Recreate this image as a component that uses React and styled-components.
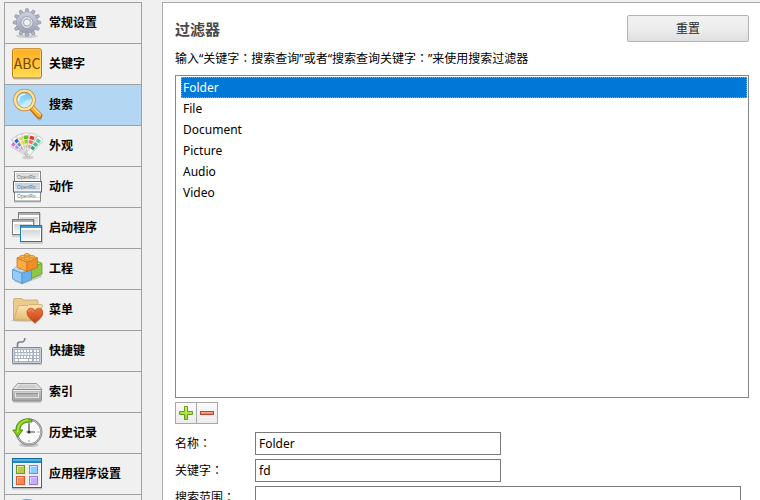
import React, { useState } from "react";
import styled, { createGlobalStyle, css } from "styled-components";

const GlobalStyle = createGlobalStyle`
  * { box-sizing: border-box; }
  body {
    margin: 0;
    background: #f0f0f0;
    color: #000;
    font: 12px/20px "Noto Sans", "Noto Sans CJK SC", sans-serif;
  }
  button, input { font: inherit; color: inherit; }
`;

const Window = styled.div`
  display: flex;
  gap: 20px;
  height: 100vh;
  padding: 2px 0 0 4px;
  overflow: hidden;
`;

const Sidebar = styled.nav`
  flex: none;
  width: 138px;
  height: max-content;
  border: 1px solid #a0a0a0;
  border-bottom: 0;
`;

const SidebarItem = styled.button`
  display: flex;
  align-items: center;
  gap: 6px;
  width: 100%;
  height: 41px;
  padding: 0 6px;
  border: 0;
  border-bottom: 1px solid #a0a0a0;
  background: ${(p) => (p.$active ? "#b3d7f3" : "#f0f0f0")};
  font-weight: 700;
  text-align: left;
  white-space: nowrap;
`;

const Icon = styled.svg`
  flex: none;
  width: 32px;
  height: 32px;
  font-weight: 400;
`;

const Panel = styled.main`
  flex: 1;
  min-width: 0;
  height: max-content;
  min-height: 100%;
  padding: 12px 11px 12px 12px;
  border: solid #acacac;
  border-width: 1px 0 0 1px;
  background: #fff;
`;

const Header = styled.header`
  display: flex;
  align-items: center;
  justify-content: space-between;
  height: 27px;
`;

const Title = styled.h1`
  margin: 0;
  color: #484848;
  font-size: 15px;
  font-weight: 700;
`;

const ResetButton = styled.button`
  width: 122px;
  height: 27px;
  padding: 0;
  border: 1px solid #b4b4b4;
  border-radius: 2px;
  background: linear-gradient(#f2f2f2, #ededed 50%, #dfdfdf);
  color: #2b2b2b;
`;

const Hint = styled.p`
  margin: 7px 0 6px;
`;

const ColonMark = styled.span`
  font-family: "Noto Sans CJK JP", sans-serif;
  line-height: 1;
`;

const FilterList = styled.ul`
  height: 323px;
  margin: 0;
  padding: 1px 1px 1px 5px;
  border: 1px solid #828790;
  list-style: none;
`;

const FilterRow = styled.li`
  height: 21px;
  padding: 0 1px;
  border: 1px solid transparent;
  line-height: 19px;
  cursor: default;
  ${(p) =>
    p.$selected &&
    css`
      border: 1px dotted #ff8728;
      background: #0078d7;
      color: #fff;
    `}
`;

const Tools = styled.div`
  display: flex;
  margin: 4px 0 8px;
`;

const ToolButton = styled.button`
  display: grid;
  place-items: center;
  width: 22px;
  height: 22px;
  padding: 0;
  border: 1px solid #a8a8a8;
  background: linear-gradient(#fafafa, #ececec);
  & + & { margin-left: -1px; }
`;

const ToolIcon = styled.svg`
  width: 16px;
  height: 16px;
`;

const Form = styled.form`
  display: grid;
  grid-template-columns: 76px minmax(0, 1fr);
  gap: 4px;
  margin-right: 8px;
`;

const Label = styled.label`
  line-height: 23px;
  white-space: nowrap;
`;

const Field = styled.input`
  width: ${(p) => (p.$wide ? "100%" : "246px")};
  max-width: 100%;
  height: 23px;
  padding: 0 3px;
  border: 1px solid #7a7a7a;
  border-radius: 0;
  background: #fff;
`;

const Colon = () => <ColonMark>：</ColonMark>;

function Gradient({ id, from, to }) {
  return (
    <linearGradient id={id} x1="0" y1="0" x2="0" y2="1">
      <stop offset="0" stopColor={from} />
      <stop offset="1" stopColor={to} />
    </linearGradient>
  );
}

const teeth = Array.from({ length: 12 }, (_, i) => i * 30);

const GearIcon = () => (
  <Icon viewBox="0 0 32 32" aria-hidden="true">
    <Gradient id="gear" from="#cdd1de" to="#9a9fb2" />
    <ellipse cx="16" cy="29" rx="11" ry="2" fill="#000" opacity=".14" />
    <g fill="#b1b6c7" stroke="#85899b" strokeWidth=".6">
      {teeth.map((a) => (
        <path key={a} d="M14 6 14.8 1.7h2.4L18 6z" transform={`rotate(${a} 16 15.5)`} />
      ))}
    </g>
    <circle cx="16" cy="15.5" r="10.6" fill="url(#gear)" stroke="#8b90a3" strokeWidth=".6" />
    <circle cx="16" cy="15.5" r="10.2" fill="url(#gear)" />
    <circle cx="16" cy="15.5" r="5.8" fill="#c9cdda" stroke="#8b90a3" strokeWidth=".8" />
    <circle cx="16" cy="15.5" r="5" fill="none" stroke="#eceef4" strokeWidth=".9" />
    <circle cx="16" cy="15.5" r="3.5" fill="#f0f0f0" stroke="#9a9fb1" strokeWidth=".8" />
  </Icon>
);

const KeywordIcon = () => (
  <Icon viewBox="0 0 32 32" aria-hidden="true">
    <Gradient id="abc" from="#ffad20" to="#ffdc52" />
    <rect x="1.5" y="2" width="29" height="29.5" rx="2.5" fill="#000" opacity=".22" />
    <rect x="1.5" y=".8" width="29" height="29" rx="2" fill="url(#abc)" stroke="#bd780b" />
    <rect x="2.5" y="1.8" width="27" height="27" rx="1" fill="none" stroke="#ffe084" strokeWidth=".7" />
    <text x="16" y="20.5" textAnchor="middle" fontFamily="'Noto Sans CJK SC', sans-serif" fontSize="14" fill="#754500">ABC</text>
  </Icon>
);

const SearchIcon = () => (
  <Icon viewBox="0 0 32 32" aria-hidden="true">
    <Gradient id="lens" from="#65c0fa" to="#c9f0ff" />
    <path d="m21 20 7.5 9" stroke="#000" strokeOpacity=".18" strokeWidth="5" strokeLinecap="round" />
    <path d="m20 18 8.2 8.6" stroke="#b96b05" strokeWidth="6" strokeLinecap="round" />
    <path d="m20 17.6 8.2 8.6" stroke="#ffb02b" strokeWidth="4.2" strokeLinecap="round" />
    <path d="m21.5 17.5 7.7 7.7" stroke="#ffe297" strokeWidth="1.2" strokeLinecap="round" />
    <circle cx="13.5" cy="11" r="9.4" fill="url(#lens)" stroke="#b9822b" strokeWidth="3.6" />
    <circle cx="13.5" cy="11" r="9.4" fill="none" stroke="#ffe3a0" strokeWidth="2.4" />
    <path d="M7.5 11.500a6 6 0 0 1 6-6.300" fill="none" stroke="#e7f8ff" strokeWidth="1.6" strokeLinecap="round" />
    <path d="M21 10c-5 .5-9 3-10.500 8 5 2 10.500-2 10.500-8z" fill="#e7faff" opacity=".5" />
  </Icon>
);

const blades = [
  [-54, "#f8f8f8", ["#d66fe0", "#b08cf0", "#e3b5ea"]],
  [-38, "#f8f8f8", ["#2f62d0", "#4f86e6", "#8db4f2"]],
  [-22, "#f8f8f8", ["#ffd820", "#f7e04a", "#f7ec90"]],
  [-6, "#f8f8f8", ["#6fbd10", "#93d234", "#c1e878"]],
  [14, "#f8f8f8", ["#ec3428", "#f76c60", "#f9a298"]],
  [38, "#f2f7f4", ["#5bcda3", "#44b98e", "#30a577"]],
];

const AppearanceIcon = () => (
  <Icon viewBox="0 0 32 32" aria-hidden="true">
    <ellipse cx="17" cy="27.5" rx="6" ry="1.8" fill="#000" opacity=".15" />
    {blades.map(([angle, paper, colors]) => (
      <g key={angle} transform={`rotate(${angle} 16.5 24.5)`}>
        <path d="M13 4.500q0-1.500 1.500-1.500h4.500q1.500 0 1.500 1.500L18.500 26h-3.500z" fill={paper} stroke="#b0b0b0" strokeWidth=".6" />
        {colors.map((c, i) => (
          <rect key={c} x={14.5 + i * 0.2} y={5.5 + i * 4.5} width={4.4 - i * 0.4} height="3.4" fill={c} />
        ))}
      </g>
    ))}
    <circle cx="16.5" cy="24.5" r="1" fill="#aaa" />
  </Icon>
);

const ActionIcon = () => (
  <Icon viewBox="0 0 32 32" aria-hidden="true">
    <Gradient id="act" from="#b9cfe5" to="#dce9f5" />
    <Gradient id="actTop" from="#d4d4d4" to="#f5f5f5" />
    <rect x="3" y="30" width="27" height="1.5" fill="#000" opacity=".2" />
    <rect x="3.5" y=".5" width="26" height="10" fill="#fff" stroke="#858585" />
    <rect x="5" y="2" width="23" height="7.5" fill="url(#actTop)" />
    <rect x="3.5" y="20.5" width="26" height="9.5" fill="#fff" stroke="#858585" />
    <rect x="2.5" y="10.5" width="28" height="10.5" fill="#fff" stroke="#3d618f" />
    <rect x="4" y="12" width="25" height="7.5" fill="url(#act)" />
    <g fontFamily="'Liberation Sans', sans-serif" fontSize="5" fill="#6c6c6c">
      <text x="6" y="7.5">OpenRo...</text>
      <text x="6" y="17.5">OpenRo...</text>
      <text x="6" y="26.5">OpenRo...</text>
    </g>
  </Icon>
);

function MiniWindow({ x, y, w, h, blue }) {
  return (
    <g>
      <rect x={x} y={y + 1} width={w + 1} height={h + 1} fill="#000" opacity=".15" />
      <rect x={x + 0.5} y={y + 0.5} width={w - 1} height={h - 1} fill="#fff" stroke={blue ? "#137ab8" : "#7d7d7d"} />
      <rect x={x + 2} y={y + 5} width={w - 4} height={h - 7} fill="url(#winBody)" />
      <rect x={x + 1} y={y + 1} width={w - 2} height="2" fill={blue ? "#3d9ddc" : "#adadad"} />
    </g>
  );
}

const ProgramsIcon = () => (
  <Icon viewBox="0 0 32 32" aria-hidden="true">
    <Gradient id="winBody" from="#d3d5d8" to="#f8f8f8" />
    <MiniWindow x={7} y={0} w={22} h={16} />
    <MiniWindow x={1} y={7} w={22} h={16} />
    <MiniWindow x={9} y={13} w={22} h={17} blue />
  </Icon>
);

const ProjectIcon = () => (
  <Icon viewBox="0 0 32 32" aria-hidden="true">
    <path d="m2 28 9 3.500 12-4.500 8-3-2-4z" fill="#000" opacity=".16" />
    <g strokeLinejoin="round" strokeWidth=".7">
      <g stroke="#5d9323">
        <path d="m20.5 13 5-4.500 5.500 2v10.500l-10.500 4.500z" fill="#8dc744" />
        <path d="m20.5 14 10.500-3.500-4-2-6.500 1z" fill="#b9e37b" />
      </g>
      <g stroke="#4a8bc6">
        <path d="m1.500 16.500 9.500 3.500v10.500L1.500 26z" fill="#94cbf8" />
        <path d="m11 20 9.500-3.500V26.500L11 30.500z" fill="#6db1ec" />
        <path d="m1.500 16.500 9-4 10 4-9.500 3.500z" fill="#b9e0ff" />
      </g>
      <g fill="#cfeaff" stroke="#6ba8dc" strokeWidth=".5">
        <ellipse cx="6" cy="15.5" rx="2.6" ry="1.400" />
        <ellipse cx="11" cy="17.5" rx="2.600" ry="1.400" />
      </g>
      <g stroke="#c06c14">
        <path d="m6 5 10 4v9.500L6 14.500z" fill="#fbab44" />
        <path d="m16 9 10.500-4v9.500L16 18.500z" fill="#ee8f26" />
        <path d="m6 5 10-4 10.500 4L16 9z" fill="#ffc46a" />
      </g>
      <g fill="#ffb550" stroke="#cf7d22" strokeWidth=".6">
        <path d="M13.500 1.500v1.500c.5 1.200 4.500 1.200 5 0V1.500M8.800 3.500V5c.5 1.200 4.500 1.200 5 0V3.500m4.700 0V5c.5 1.200 4.500 1.200 5 0V3.500M13.500 5.500V7c.5 1.200 4.500 1.200 5 0V5.500" />
        <ellipse cx="16" cy="1.600" rx="2.500" ry="1.200" />
        <ellipse cx="11.300" cy="3.500" rx="2.500" ry="1.200" />
        <ellipse cx="21" cy="3.500" rx="2.500" ry="1.200" />
        <ellipse cx="16" cy="5.500" rx="2.500" ry="1.200" />
      </g>
    </g>
  </Icon>
);

const MenuIcon = () => (
  <Icon viewBox="0 0 32 32" aria-hidden="true">
    <Gradient id="fold" from="#fae5b3" to="#e5bd76" />
    <Gradient id="heart" from="#ee7440" to="#c3400f" />
    <ellipse cx="14" cy="26.5" rx="14" ry="1.5" fill="#000" opacity=".15" />
    <path d="M2.500 26V5.500q0-1 1-1h7q1 0 1.500 1.500h14q1 0 1 1V26z" fill="#eccb91" stroke="#c9a264" strokeWidth=".8" />
    <path d="M3 26 7 12.500q.3-1 1.300-1H17l1-1h12.500q1 0 .8 1L28 26z" fill="url(#fold)" stroke="#cba466" strokeWidth=".8" />
    <path d="M24 29.500c-2-3-8-6-8-11 0-4.500 6-6 8-1.500 2-4.500 8-3 8 1.500 0 5-6 8-8 11z" fill="url(#heart)" stroke="#a53b14" strokeWidth=".6" />
    <path d="M17.500 18c.5-3 4-3 5.500 0" fill="none" stroke="#f6a37a" strokeWidth=".7" />
  </Icon>
);

const keyRows = [15, 18, 21];
const keyCols = [4, 7, 10, 13, 16, 19];

const KeyboardIcon = () => (
  <Icon viewBox="0 0 32 32" aria-hidden="true">
    <rect x="1" y="28" width="30" height="2" fill="#000" opacity=".15" />
    <path d="M6.500 12V9.500Q6.500 7 9 7h2q2.500 0 3-4" fill="none" stroke="#79828a" strokeWidth="1.6" />
    <rect x="1.5" y="12.5" width="29" height="16" rx="1" fill="#a9b4c0" stroke="#7e8995" />
    <rect x="2.5" y="13.5" width="27" height="14" fill="none" stroke="#d3dae2" strokeWidth=".7" />
    <g fill="#fff">
      {keyRows.map((y, r) =>
        keyCols.map((x) => <rect key={`${x}-${y}`} x={x + (r === 1 ? 0.5 : 0)} y={y} width="2" height="2" />)
      )}
      <rect x="4" y="24" width="3" height="2" />
      <rect x="8" y="24" width="9" height="2" />
      <rect x="18" y="24" width="3" height="2" />
      {[...keyRows, 24].map((y) => (
        <g key={y}>
          <rect x="23" y={y} width="2" height="2" />
          <rect x="26" y={y} width="2" height="2" />
        </g>
      ))}
    </g>
  </Icon>
);

const IndexIcon = () => (
  <Icon viewBox="0 0 32 32" aria-hidden="true">
    <Gradient id="drv" from="#c9c9c9" to="#a2a2a2" />
    <rect x="2" y="25" width="28" height="2" fill="#000" opacity=".14" />
    <path d="M6.500 7.500h19l5.500 6H1.500z" fill="#e2e2e2" stroke="#9a9a9a" />
    <path d="M8.500 8.800h15l3.500 3.500H5.500z" fill="#cdcdcd" />
    <rect x="1.5" y="13.500" width="29" height="11.500" rx="1" fill="url(#drv)" stroke="#8c8c8c" />
    <path d="M2.500 14.500h27" stroke="#ededed" />
    <rect x="4.5" y="17" width="23" height="4.500" fill="#b4b4b4" stroke="#e2e2e2" />
    <path d="M5 17.500h22" stroke="#919191" />
  </Icon>
);

const HistoryIcon = () => (
  <Icon viewBox="0 0 32 32" aria-hidden="true">
    <ellipse cx="18" cy="28" rx="10" ry="2" fill="#000" opacity=".18" />
    <circle cx="18" cy="15" r="12.3" fill="#fafafa" stroke="#808080" strokeWidth="2.2" />
    <circle cx="18" cy="15" r="12.3" fill="none" stroke="#c4c4c4" strokeWidth="1" />
    <path d="M18 5v2m0 16v2m8.500-10h2" stroke="#999" />
    <path d="M18 6.500v9m-2.500-.5h8.500" stroke="#454545" strokeWidth="1.200" />
    <circle cx="18" cy="15" r="1.500" fill="#333" />
    <path d="M21 2.500C13 0 4.500 5 5 13H1.800l5 6.800 5-6.800H9c0-5 4-8.500 12-8z" fill="#84cc18" stroke="#46820a" strokeWidth=".9" strokeLinejoin="round" />
    <path d="M17 2.700C10.500 3.500 6.700 8 6.700 15" fill="none" stroke="#c5f176" strokeWidth=".9" />
  </Icon>
);

const tiles = [
  [5.5, 7.5, "#b5cd4f", "#77911f"],
  [18.5, 7.5, "#8ccbff", "#589fd9"],
  [5.5, 18.5, "#ff8260", "#d85e2e"],
  [18.5, 18.5, "#c5adff", "#967bd5"],
];

const AppSettingsIcon = () => (
  <Icon viewBox="0 0 32 32" aria-hidden="true">
    <rect x="1" y="30" width="30" height="1.5" fill="#000" opacity=".2" />
    <rect x="1.5" y=".5" width="29" height="29" fill="#fff" stroke="#146d9e" />
    <rect x="3" y="6" width="26" height="22" fill="#ececec" />
    <rect x="2" y="1" width="28" height="2" fill="#58b2e6" />
    <rect x="2" y="3" width="28" height="2" fill="#1f86c4" />
    {tiles.map(([x, y, fill, stroke]) => (
      <g key={fill}>
        <rect x={x} y={y} width="8" height="8" fill={fill} stroke={stroke} />
        <path d={`M${x + 1} ${y + 7}v-6h6`} fill="none" stroke="#fff" strokeOpacity=".5" />
      </g>
    ))}
  </Icon>
);

const InfoIcon = () => (
  <Icon viewBox="0 0 32 32" aria-hidden="true">
    <circle cx="16" cy="15" r="15" fill="#4aa3e2" />
    <circle cx="16" cy="15" r="13" fill="#2b8ed6" />
  </Icon>
);

const sections = [
  ["常规设置", GearIcon],
  ["关键字", KeywordIcon],
  ["搜索", SearchIcon],
  ["外观", AppearanceIcon],
  ["动作", ActionIcon],
  ["启动程序", ProgramsIcon],
  ["工程", ProjectIcon],
  ["菜单", MenuIcon],
  ["快捷键", KeyboardIcon],
  ["索引", IndexIcon],
  ["历史记录", HistoryIcon],
  ["应用程序设置", AppSettingsIcon],
  ["", InfoIcon],
];

const filters = [
  ["Folder", "fd"],
  ["File", ""],
  ["Document", ""],
  ["Picture", ""],
  ["Audio", ""],
  ["Video", ""],
];

export default function App() {
  const [section, setSection] = useState(2);
  const [selected, setSelected] = useState(0);
  const [name, keyword] = filters[selected];

  return (
    <>
      <GlobalStyle />
      <Window>
        <Sidebar>
          {sections.map(([label, Glyph], i) => (
            <SidebarItem key={i} type="button" $active={i === section} onClick={() => setSection(i)}>
              <Glyph />
              {label}
            </SidebarItem>
          ))}
        </Sidebar>
        <Panel>
          <Header>
            <Title>过滤器</Title>
            <ResetButton type="button">重置</ResetButton>
          </Header>
          <Hint>
            输入“关键字<Colon />搜索查询”或者“搜索查询关键字<Colon />”来使用搜索过滤器
          </Hint>
          <FilterList role="listbox" aria-label="过滤器" tabIndex={0}>
            {filters.map(([label], i) => (
              <FilterRow
                key={label}
                role="option"
                aria-selected={i === selected}
                $selected={i === selected}
                onClick={() => setSelected(i)}
              >
                {label}
              </FilterRow>
            ))}
          </FilterList>
          <Tools>
            <ToolButton type="button" aria-label="添加">
              <ToolIcon viewBox="0 0 16 16" aria-hidden="true">
                <Gradient id="plus" from="#d8f277" to="#8ed02c" />
                <path d="M6.500 1.500h3v5h5v3h-5v5h-3v-5h-5v-3h5z" fill="url(#plus)" stroke="#5fa112" />
              </ToolIcon>
            </ToolButton>
            <ToolButton type="button" aria-label="删除">
              <ToolIcon viewBox="0 0 16 16" aria-hidden="true">
                <Gradient id="minus" from="#ffc0a6" to="#e8694c" />
                <rect x="1.5" y="6.500" width="13" height="3" fill="url(#minus)" stroke="#c14430" />
              </ToolIcon>
            </ToolButton>
          </Tools>
          <Form onSubmit={(e) => e.preventDefault()}>
            <Label htmlFor="name">名称<Colon /></Label>
            <Field id="name" key={`name-${selected}`} defaultValue={name} />
            <Label htmlFor="keyword">关键字<Colon /></Label>
            <Field id="keyword" key={`keyword-${selected}`} defaultValue={keyword} />
            <Label htmlFor="scope">搜索范围<Colon /></Label>
            <Field id="scope" $wide />
          </Form>
        </Panel>
      </Window>
    </>
  );
}
